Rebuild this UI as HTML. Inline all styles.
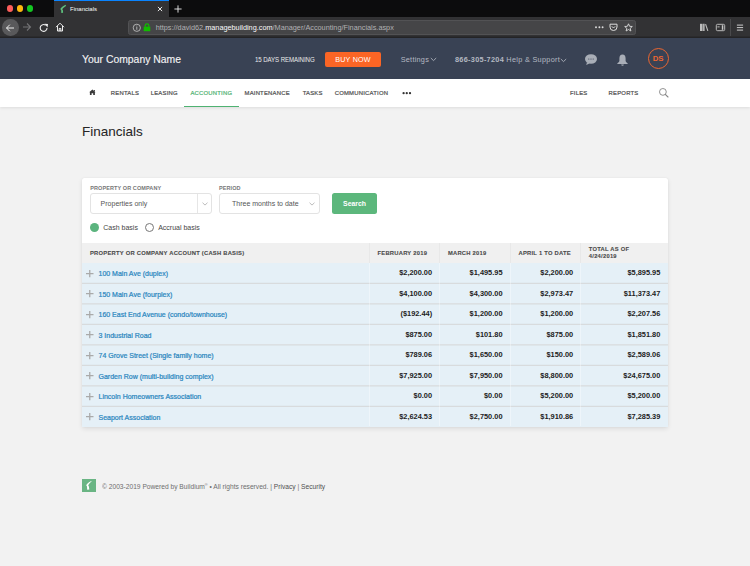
<!DOCTYPE html>
<html><head><meta charset="utf-8">
<style>
*{margin:0;padding:0;box-sizing:border-box}
html,body{width:750px;height:566px;overflow:hidden;background:#f2f2f2;font-family:"Liberation Sans",sans-serif}
.a{position:absolute;white-space:nowrap}
#tabs{position:absolute;left:0;top:0;width:750px;height:17px;background:#0c0c0d}
#tb{position:absolute;left:0;top:17px;width:750px;height:21px;background:#323234;box-shadow:inset 0 -1.5px 0 #242426}
#hdr{position:absolute;left:0;top:37.6px;width:750px;height:41.4px;background:#394254}
#nav{position:absolute;left:0;top:79px;width:750px;height:28px;background:#fff;box-shadow:0 1px 3px rgba(0,0,0,0.09)}
.nv{position:absolute;top:89px;font-size:5.9px;font-weight:normal;color:#505050;letter-spacing:0.22px;line-height:8px;-webkit-text-stroke:0.2px currentColor}
#card{position:absolute;left:82px;top:177.7px;width:586px;height:249.3px;background:#fff;border-radius:2px;box-shadow:0 0 1px rgba(0,0,0,0.12),0 2px 5px rgba(0,0,0,0.09)}
.lbl{position:absolute;font-size:5.5px;font-weight:bold;color:#777;letter-spacing:0.1px;line-height:7px}
.sel{position:absolute;border:1px solid #e3e3e3;border-radius:3px;background:#fff}
.th{position:absolute;font-size:5.8px;font-weight:bold;color:#4a4a4a;letter-spacing:0.25px;line-height:6.5px;-webkit-text-stroke:0.1px #4a4a4a}
.row{position:absolute;left:82px;width:586px;height:20.4px;background:#e5f0f7;border-bottom:1px solid #d6dde2}
.lk{position:absolute;left:98.5px;font-size:7px;color:#2b87c0;line-height:9px;-webkit-text-stroke:0.22px #2b87c0}
.num{position:absolute;font-size:7.4px;font-weight:bold;color:#222;line-height:9px;text-align:right}
.plus{position:absolute;left:86px;width:7px;height:7px}
.plus:before{content:"";position:absolute;left:3.05px;top:0;width:1.4px;height:7.2px;background:#aaa}
.plus:after{content:"";position:absolute;left:0;top:2.9px;width:7.5px;height:1.4px;background:#aaa}
</style></head><body>
<!-- tab strip -->
<div id="tabs"></div>
<div class="a" style="left:6.7px;top:5.3px;width:6.6px;height:6.6px;border-radius:50%;background:#fc5d5b"></div>
<div class="a" style="left:16.7px;top:5.3px;width:6.6px;height:6.6px;border-radius:50%;background:#fdb80e"></div>
<div class="a" style="left:26.7px;top:5.3px;width:6.6px;height:6.6px;border-radius:50%;background:#14c722"></div>
<div class="a" style="left:54px;top:0;width:115px;height:17px;background:#323234;border-top:1.3px solid #0a84ff"></div>
<svg class="a" style="left:60px;top:4px" width="7" height="10" viewBox="0 0 7 10"><path d="M5.8 0.7C3.8 1.5 1.1 3.2 0.3 5L1.2 6.3L1.3 9.1L3.1 8.7L2.9 6.3L2.3 5.2C3.1 3.9 4.6 2.6 5.9 1.9Z" fill="#5ec07e"/></svg>
<div class="a" style="left:70px;top:5px;font-size:6px;color:#f9f9fa;line-height:8px">Financials</div>
<svg class="a" style="left:157.4px;top:5.5px" width="6" height="6" viewBox="0 0 6 6"><path d="M0.9 0.9L5.1 5.1M5.1 0.9L0.9 5.1" stroke="#eee" stroke-width="0.95"/></svg>
<svg class="a" style="left:173.6px;top:4.5px" width="8" height="8" viewBox="0 0 8 8"><path d="M4 0.4V7.6M0.4 4H7.6" stroke="#eee" stroke-width="0.9"/></svg>
<!-- toolbar -->
<div id="tb"></div>
<div class="a" style="left:2px;top:19px;width:16.5px;height:16.5px;border-radius:50%;background:#59595b"></div>
<svg class="a" style="left:5px;top:22.5px" width="10" height="10" viewBox="0 0 10 10"><path d="M9 5H1.5M4.8 1.7L1.5 5L4.8 8.3" stroke="#f5f5f5" stroke-width="0.95" fill="none"/></svg>
<svg class="a" style="left:22px;top:22px" width="10" height="10" viewBox="0 0 10 10"><path d="M1 5H8.5M5 1.5L8.5 5L5 8.5" stroke="#727274" stroke-width="1.1" fill="none"/></svg>
<svg class="a" style="left:39px;top:22.5px" width="10" height="10" viewBox="0 0 10 10"><path d="M8 5A3.4 3.4 0 1 1 6.6 2.2" stroke="#eee" stroke-width="1.1" fill="none"/><path d="M5.5 0.8L9 1L8.6 4.5Z" fill="#eee"/></svg>
<svg class="a" style="left:55px;top:22px" width="10" height="10" viewBox="0 0 10 10"><path d="M1 5.2L5 1.2L9 5.2M2.5 4V9H7.5V4M4.2 9V6.5H5.8V9" stroke="#eee" stroke-width="1" fill="none"/></svg>
<div class="a" style="left:128.3px;top:19.5px;width:507.4px;height:15.3px;border-radius:2.5px;background:#454547;border:1px solid #525254"></div>
<svg class="a" style="left:132px;top:22.5px" width="10" height="10" viewBox="0 0 10 10"><circle cx="4.8" cy="4.8" r="3.6" stroke="#bbb" stroke-width="0.9" fill="none"/><path d="M4.8 4V6.8" stroke="#bbb" stroke-width="0.9"/><circle cx="4.8" cy="3" r="0.5" fill="#bbb"/></svg>
<svg class="a" style="left:143px;top:23px" width="8" height="9" viewBox="0 0 8 9"><path d="M0.7 3.6H7.3V8.2H0.7Z" fill="#12bc00"/><path d="M2.2 3.8V2.6A1.8 1.8 0 0 1 5.8 2.6V3.8" stroke="#12bc00" stroke-width="1.2" fill="none"/></svg>
<div class="a" style="left:155.7px;top:23px;font-size:7.3px;color:#b1b1b3;line-height:9px">https://david62.<span style="color:#f9f9fa">managebuilding.com</span>/Manager/Accounting/Financials.aspx</div>
<svg class="a" style="left:593px;top:24px" width="12" height="6" viewBox="0 0 12 6"><circle cx="3" cy="3.2" r="0.95" fill="#ddd"/><circle cx="6.4" cy="3.2" r="0.95" fill="#ddd"/><circle cx="9.6" cy="3.2" r="0.95" fill="#ddd"/></svg>
<svg class="a" style="left:609px;top:23px" width="9" height="9" viewBox="0 0 9 9"><path d="M1 1.2H8V4A3.5 3.5 0 0 1 1 4Z" stroke="#ddd" stroke-width="1" fill="none"/><path d="M2.8 3.3L4.5 5L6.2 3.3" stroke="#ddd" stroke-width="1" fill="none"/></svg>
<svg class="a" style="left:623.5px;top:22.5px" width="9" height="9" viewBox="0 0 9 9"><path d="M4.5 0.8L5.6 3.3L8.3 3.5L6.2 5.3L6.9 8L4.5 6.5L2.1 8L2.8 5.3L0.7 3.5L3.4 3.3Z" stroke="#ddd" stroke-width="0.9" fill="none" stroke-linejoin="round"/></svg>
<svg class="a" style="left:699px;top:23px" width="10" height="9" viewBox="0 0 10 9"><path d="M1 0.8H3.6V8H1Z" fill="#bdbdbd"/><path d="M4.1 0.8H5.6V8H4.1Z" fill="#bdbdbd"/><path d="M6 1.2L7.1 0.9L9.4 7.8L8.3 8.1Z" fill="#bdbdbd"/></svg>
<svg class="a" style="left:715px;top:23px" width="11" height="9" viewBox="0 0 11 9"><rect x="1.3" y="1.3" width="8.4" height="6.4" rx="1.3" stroke="#c8c8c8" stroke-width="0.9" fill="none"/><path d="M6.8 2.2H8.3V6.8H6.8Z" fill="#c8c8c8"/><path d="M2.4 3H4.6V4.6H2.4Z" fill="#888"/></svg>
<div class="a" style="left:730.4px;top:18.6px;width:0.8px;height:17.6px;background:#4a4a4c"></div>
<svg class="a" style="left:736px;top:23px" width="9" height="9" viewBox="0 0 9 9"><path d="M0.9 2.1H7.1M0.9 4.6H7.1M0.9 7.1H7.1" stroke="#d5d5d5" stroke-width="0.95"/></svg>

<!-- header -->
<div id="hdr"></div>
<div class="a" style="left:82px;top:52.5px;font-size:10.4px;color:#f4f4f4;line-height:13px;-webkit-text-stroke:0.12px #f4f4f4">Your Company Name</div>
<div class="a" style="left:254.7px;top:54.6px;font-size:6.8px;color:#eaeaea;line-height:9px;letter-spacing:-0.1px;transform:scaleX(0.9);transform-origin:0 0">15 DAYS REMAINING</div>
<div class="a" style="left:325px;top:51.5px;width:56px;height:15.5px;background:#fb6525;border-radius:2px"></div>
<div class="a" style="left:325px;top:55px;width:56px;text-align:center;font-size:7.2px;color:#fff;line-height:9px;letter-spacing:0.2px">BUY NOW</div>
<div class="a" style="left:400.7px;top:54.6px;font-size:7.3px;color:#b4b9c2;line-height:9px;letter-spacing:0.25px">Settings</div>
<svg class="a" style="left:429.8px;top:57.3px" width="7" height="5" viewBox="0 0 7 5"><path d="M0.8 1L3.5 3.6L6.2 1" stroke="#aeb3bd" stroke-width="0.9" fill="none"/></svg>
<div class="a" style="left:455px;top:55px;font-size:7.3px;color:#b4b9c2;line-height:9px;letter-spacing:0.3px"><b>866-305-7204</b> Help &amp; Support</div>
<svg class="a" style="left:560px;top:57.5px" width="7" height="5" viewBox="0 0 7 5"><path d="M0.8 1L3.5 3.6L6.2 1" stroke="#aeb3bd" stroke-width="0.9" fill="none"/></svg>
<svg class="a" style="left:584px;top:53px" width="14" height="13" viewBox="0 0 14 13"><ellipse cx="7" cy="6" rx="6" ry="4.8" fill="#a9aeb7"/><path d="M3 9.5L2.2 12L5.5 10.5Z" fill="#a9aeb7"/><circle cx="4.8" cy="6" r="0.6" fill="#3a4254"/><circle cx="7" cy="6" r="0.6" fill="#3a4254"/><circle cx="9.2" cy="6" r="0.6" fill="#3a4254"/></svg>
<svg class="a" style="left:615.5px;top:52.5px" width="13" height="14" viewBox="0 0 13 14"><path d="M6.5 1.6C4.4 1.6 3.4 3.3 3.4 5.4V7.8C3.4 8.8 2.2 9.8 1.3 10.5V10.9H11.7V10.5C10.8 9.8 9.6 8.8 9.6 7.8V5.4C9.6 3.3 8.6 1.6 6.5 1.6Z" fill="#a9aeb7"/><path d="M5.2 11.4A1.3 1.3 0 0 0 7.8 11.4Z" fill="#a9aeb7"/></svg>
<div class="a" style="left:647.5px;top:48px;width:21.2px;height:21.2px;border-radius:50%;border:1.5px solid #ec6630"></div>
<div class="a" style="left:647.5px;top:54px;width:21.2px;text-align:center;font-size:7.8px;font-weight:bold;color:#ec6630;line-height:10px">DS</div>

<!-- nav -->
<div id="nav"></div>
<svg class="a" style="left:89px;top:89px" width="8" height="7" viewBox="0 0 8 7"><path d="M3.4 0.5L6.6 3.3H5.9V6.1H4.2V4.3H2.6V6.1H0.9V3.3H0.2Z" fill="#3a3a3a"/><path d="M4.9 0.9H5.9V2.5L4.9 1.7Z" fill="#3a3a3a"/></svg>
<div class="nv" style="left:110.8px">RENTALS</div>
<div class="nv" style="left:150.7px">LEASING</div>
<div class="nv" style="left:190.4px;color:#4fb272">ACCOUNTING</div>
<div class="a" style="left:183.6px;top:105.5px;width:55.1px;height:1.7px;background:#4fb272"></div>
<div class="nv" style="left:244.5px">MAINTENANCE</div>
<div class="nv" style="left:302.7px">TASKS</div>
<div class="nv" style="left:334.7px">COMMUNICATION</div>
<svg class="a" style="left:400px;top:90px" width="14" height="6" viewBox="0 0 14 6"><circle cx="3.6" cy="3.2" r="1.15" fill="#333"/><circle cx="6.75" cy="3.2" r="1.15" fill="#333"/><circle cx="10" cy="3.2" r="1.15" fill="#333"/></svg>
<div class="nv" style="left:570px">FILES</div>
<div class="nv" style="left:608.6px">REPORTS</div>
<svg class="a" style="left:658px;top:86.5px" width="11" height="11" viewBox="0 0 11 11"><circle cx="4.9" cy="4.9" r="3.4" stroke="#858585" stroke-width="0.9" fill="none"/><path d="M7.3 7.3L10 10" stroke="#858585" stroke-width="1.1" stroke-linecap="round"/></svg>

<!-- title -->
<div class="a" style="left:82px;top:124px;font-size:13.5px;color:#262626;line-height:16px;-webkit-text-stroke:0.05px #262626">Financials</div>

<!-- card -->
<div id="card"></div>
<div class="lbl" style="left:90.2px;top:184.5px">PROPERTY OR COMPANY</div>
<div class="sel" style="left:90.2px;top:193.4px;width:121.6px;height:20.3px"></div>
<div class="a" style="left:197.4px;top:194px;width:1px;height:19px;background:#e6e6e6"></div>
<svg class="a" style="left:201.5px;top:201.7px" width="6" height="4" viewBox="0 0 6 4"><path d="M0.5 0.7L3 3.1L5.5 0.7" stroke="#a5a5a5" stroke-width="0.75" fill="none"/></svg>
<div class="a" style="left:100.6px;top:199px;font-size:7px;color:#555;line-height:9px">Properties only</div>
<div class="lbl" style="left:219px;top:184.5px">PERIOD</div>
<div class="sel" style="left:218.7px;top:193.4px;width:101.2px;height:20.3px"></div>
<div class="a" style="left:232px;top:199px;font-size:7px;color:#555;line-height:9px">Three months to date</div>
<svg class="a" style="left:309px;top:201.7px" width="6" height="4" viewBox="0 0 6 4"><path d="M0.5 0.7L3 3.1L5.5 0.7" stroke="#a5a5a5" stroke-width="0.75" fill="none"/></svg>
<div class="a" style="left:332.4px;top:193.3px;width:44.4px;height:20.4px;background:#5cb77c;border-radius:2.5px"></div>
<div class="a" style="left:332.4px;top:199.4px;width:44.4px;text-align:center;font-size:6.9px;font-weight:bold;color:#fff;line-height:9px">Search</div>
<div class="a" style="left:89.8px;top:223.4px;width:9px;height:9px;border-radius:50%;background:#5bb47e"></div>
<div class="a" style="left:103.3px;top:222.8px;font-size:7px;color:#444;line-height:9px">Cash basis</div>
<div class="a" style="left:144.9px;top:223.4px;width:9px;height:9px;border-radius:50%;border:0.8px solid #777;background:#fff"></div>
<div class="a" style="left:158.2px;top:222.8px;font-size:7px;color:#444;line-height:9px">Accrual basis</div>

<!-- table header -->
<div class="a" style="left:82px;top:242.5px;width:586px;height:21px;background:#f0f0f0"></div>
<div class="a" style="left:369px;top:242.5px;width:1px;height:21px;background:#e8e8e8"></div>
<div class="a" style="left:439px;top:242.5px;width:1px;height:21px;background:#e8e8e8"></div>
<div class="a" style="left:510px;top:242.5px;width:1px;height:21px;background:#e8e8e8"></div>
<div class="a" style="left:580px;top:242.5px;width:1px;height:21px;background:#e8e8e8"></div>
<div class="th" style="left:90px;top:249.5px">PROPERTY OR COMPANY ACCOUNT (CASH BASIS)</div>
<div class="th" style="left:377.5px;top:249.5px">FEBRUARY 2019</div>
<div class="th" style="left:447.9px;top:249.5px">MARCH 2019</div>
<div class="th" style="left:518.5px;top:249.5px">APRIL 1 TO DATE</div>
<div class="th" style="left:588.8px;top:246.3px">TOTAL AS OF<br>4/24/2019</div>
<!-- rows -->
<div class="a" style="left:82px;top:263px;width:586px;height:164px;background:#e5f0f7"></div>
<svg class="a" style="left:82px;top:263px" width="586" height="164" viewBox="0 0 586 164"><path d="M0 20.40H586" stroke="#d8dbdd" stroke-width="1.25"/><path d="M0 40.88H586" stroke="#d8dbdd" stroke-width="1.25"/><path d="M0 61.36H586" stroke="#d8dbdd" stroke-width="1.25"/><path d="M0 81.84H586" stroke="#d8dbdd" stroke-width="1.25"/><path d="M0 102.32H586" stroke="#d8dbdd" stroke-width="1.25"/><path d="M0 122.80H586" stroke="#d8dbdd" stroke-width="1.25"/><path d="M0 143.28H586" stroke="#d8dbdd" stroke-width="1.25"/></svg>
<div class="a" style="left:369px;top:263px;width:1px;height:163px;background:rgba(255,255,255,0.35)"></div>
<div class="a" style="left:439px;top:263px;width:1px;height:163px;background:rgba(255,255,255,0.35)"></div>
<div class="a" style="left:510px;top:263px;width:1px;height:163px;background:rgba(255,255,255,0.35)"></div>
<div class="a" style="left:580px;top:263px;width:1px;height:163px;background:rgba(255,255,255,0.35)"></div>
<svg class="a" style="left:86px;top:269.9px" width="8" height="8" viewBox="0 0 8 8"><path d="M3.75 0V7.2M0 3.6H7.5" stroke="#aaa" stroke-width="1.3"/></svg>
<div class="lk" style="top:269.1px">100 Main Ave (duplex)</div>
<div class="num" style="left:352.1px;width:80px;top:268.3px">$2,200.00</div>
<div class="num" style="left:422.5px;width:80px;top:268.3px">$1,495.95</div>
<div class="num" style="left:493.2px;width:80px;top:268.3px">$2,200.00</div>
<div class="num" style="left:580.3px;width:80px;top:268.3px">$5,895.95</div>
<svg class="a" style="left:86px;top:290.4px" width="8" height="8" viewBox="0 0 8 8"><path d="M3.75 0V7.2M0 3.6H7.5" stroke="#aaa" stroke-width="1.3"/></svg>
<div class="lk" style="top:289.6px">150 Main Ave (fourplex)</div>
<div class="num" style="left:352.1px;width:80px;top:288.8px">$4,100.00</div>
<div class="num" style="left:422.5px;width:80px;top:288.8px">$4,300.00</div>
<div class="num" style="left:493.2px;width:80px;top:288.8px">$2,973.47</div>
<div class="num" style="left:580.3px;width:80px;top:288.8px">$11,373.47</div>
<svg class="a" style="left:86px;top:310.9px" width="8" height="8" viewBox="0 0 8 8"><path d="M3.75 0V7.2M0 3.6H7.5" stroke="#aaa" stroke-width="1.3"/></svg>
<div class="lk" style="top:310.1px">160 East End Avenue (condo/townhouse)</div>
<div class="num" style="left:352.1px;width:80px;top:309.3px">($192.44)</div>
<div class="num" style="left:422.5px;width:80px;top:309.3px">$1,200.00</div>
<div class="num" style="left:493.2px;width:80px;top:309.3px">$1,200.00</div>
<div class="num" style="left:580.3px;width:80px;top:309.3px">$2,207.56</div>
<svg class="a" style="left:86px;top:331.3px" width="8" height="8" viewBox="0 0 8 8"><path d="M3.75 0V7.2M0 3.6H7.5" stroke="#aaa" stroke-width="1.3"/></svg>
<div class="lk" style="top:330.5px">3 Industrial Road</div>
<div class="num" style="left:352.1px;width:80px;top:329.7px">$875.00</div>
<div class="num" style="left:422.5px;width:80px;top:329.7px">$101.80</div>
<div class="num" style="left:493.2px;width:80px;top:329.7px">$875.00</div>
<div class="num" style="left:580.3px;width:80px;top:329.7px">$1,851.80</div>
<svg class="a" style="left:86px;top:351.8px" width="8" height="8" viewBox="0 0 8 8"><path d="M3.75 0V7.2M0 3.6H7.5" stroke="#aaa" stroke-width="1.3"/></svg>
<div class="lk" style="top:351.0px">74 Grove Street (Single family home)</div>
<div class="num" style="left:352.1px;width:80px;top:350.2px">$789.06</div>
<div class="num" style="left:422.5px;width:80px;top:350.2px">$1,650.00</div>
<div class="num" style="left:493.2px;width:80px;top:350.2px">$150.00</div>
<div class="num" style="left:580.3px;width:80px;top:350.2px">$2,589.06</div>
<svg class="a" style="left:86px;top:372.3px" width="8" height="8" viewBox="0 0 8 8"><path d="M3.75 0V7.2M0 3.6H7.5" stroke="#aaa" stroke-width="1.3"/></svg>
<div class="lk" style="top:371.5px">Garden Row (multi-building complex)</div>
<div class="num" style="left:352.1px;width:80px;top:370.7px">$7,925.00</div>
<div class="num" style="left:422.5px;width:80px;top:370.7px">$7,950.00</div>
<div class="num" style="left:493.2px;width:80px;top:370.7px">$8,800.00</div>
<div class="num" style="left:580.3px;width:80px;top:370.7px">$24,675.00</div>
<svg class="a" style="left:86px;top:392.8px" width="8" height="8" viewBox="0 0 8 8"><path d="M3.75 0V7.2M0 3.6H7.5" stroke="#aaa" stroke-width="1.3"/></svg>
<div class="lk" style="top:392.0px">Lincoln Homeowners Association</div>
<div class="num" style="left:352.1px;width:80px;top:391.2px">$0.00</div>
<div class="num" style="left:422.5px;width:80px;top:391.2px">$0.00</div>
<div class="num" style="left:493.2px;width:80px;top:391.2px">$5,200.00</div>
<div class="num" style="left:580.3px;width:80px;top:391.2px">$5,200.00</div>
<svg class="a" style="left:86px;top:413.3px" width="8" height="8" viewBox="0 0 8 8"><path d="M3.75 0V7.2M0 3.6H7.5" stroke="#aaa" stroke-width="1.3"/></svg>
<div class="lk" style="top:412.5px">Seaport Association</div>
<div class="num" style="left:352.1px;width:80px;top:411.7px">$2,624.53</div>
<div class="num" style="left:422.5px;width:80px;top:411.7px">$2,750.00</div>
<div class="num" style="left:493.2px;width:80px;top:411.7px">$1,910.86</div>
<div class="num" style="left:580.3px;width:80px;top:411.7px">$7,285.39</div>
<!-- footer -->
<div class="a" style="left:82px;top:479px;width:13.6px;height:13.4px;background:#6ab584"></div>
<svg class="a" style="left:82px;top:479px" width="14" height="14" viewBox="0 0 14 14"><path d="M9.3 2C7.5 2.8 5 4.5 4.2 6.2L5 7.4L5.2 10.8L7.3 10.4L6.9 7.4L6.2 6.4C6.9 5 8.3 3.6 9.6 2.6Z" fill="#fff"/></svg>
<div class="a" style="left:101.7px;top:481.6px;font-size:7px;color:#6e6e6e;line-height:9px;transform:scaleX(0.95);transform-origin:0 0">&#169; 2003-2019 Powered by Buildium<span style="font-size:4px;position:relative;top:-2.2px">&#174;</span> &#8226; All rights reserved. | <span style="color:#505050">Privacy</span> | <span style="color:#505050">Security</span></div>
</body></html>
